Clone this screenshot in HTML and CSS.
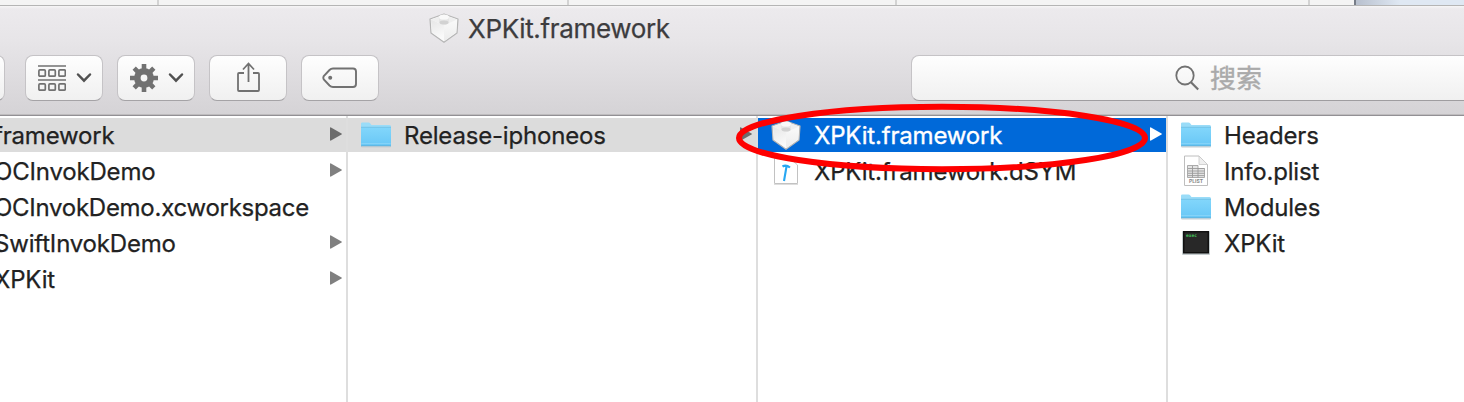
FILE: index.html
```html
<!DOCTYPE html>
<html lang="zh">
<head>
<meta charset="utf-8">
<title>XPKit.framework</title>
<link rel="stylesheet" href="styles.css">
</head>
<body>
<svg width="0" height="0" class="defs">
  <defs>
    <linearGradient id="folderFill" x1="0" y1="0" x2="0" y2="1"><stop offset="0" stop-color="#82d6fb"/><stop offset="1" stop-color="#68c7f6"/></linearGradient>
    <linearGradient id="brickLeft" x1="0" y1="0" x2="0.3" y2="1"><stop offset="0" stop-color="#e6e6e6"/><stop offset="1" stop-color="#fafafa"/></linearGradient>
    <linearGradient id="brickRight" x1="0" y1="0" x2="0" y2="1"><stop offset="0" stop-color="#fafafa"/><stop offset="1" stop-color="#ececec"/></linearGradient>
    <symbol id="folder" viewBox="0 0 32 28">
      <path d="M1 25V2.800Q1 1.500 2.300 1.500H8.500Q9.600 1.500 10.300 2.400L11.500 4H29.500Q31 4 31 5.500V25Z" fill="#9adcf8"/>
      <path d="M1 6.500H31V24Q31 25 30 25H2Q1 25 1 24Z" fill="url(#folderFill)"/>
      <path d="M1 6.300H31" stroke="#69bce3" stroke-width=".8"/>
      <path d="M1.300 22.500H30.700" stroke="#8ad5f8" stroke-width=".8"/>
      <path d="M1 25H31" stroke="#5aa9d1" stroke-width="1"/>
      <path d="M1.500 26H30.500" stroke="#c8cdd0" stroke-width="1"/>
    </symbol>
    <symbol id="brick" viewBox="0 0 30 30">
      <path d="M1 6L15 1L29 6L28 20L15 29.300L2 20Z" fill="#f8f8f8" stroke="#b5b5b5" stroke-width="1.200" stroke-linejoin="round"/>
      <path d="M2 6.500L15 12.500V28L3 19.500Z" fill="url(#brickLeft)"/>
      <path d="M28 6.500L15 12.500V28L27 19.500Z" fill="url(#brickRight)"/>
      <path d="M2 6.500L15 2L28 6.500L15 12.500Z" fill="#efefef"/>
      <path d="M10 4V9Q15 12.500 20 9V4Z" fill="#e6e6e6"/>
      <ellipse cx="15" cy="9.500" rx="4.500" ry="2" fill="#d2d2d2"/>
      <ellipse cx="15" cy="4" rx="5" ry="2.600" fill="#f9f9f9"/>
    </symbol>
    <symbol id="arrow" viewBox="0 0 12 14"><path d="M0 1Q0 0 1 .5L11.500 6.400Q12.300 7 11.500 7.600L1 13.500Q0 14 0 13Z" fill="currentColor"/></symbol>
    <symbol id="chevron" viewBox="0 0 16 12"><path d="M2 2.500L8 8.700L14 2.500" fill="none" stroke="#515151" stroke-width="2.500" stroke-linecap="round"/></symbol>
  </defs>
</svg>
<div class="screen">
  <div class="behind"><i class="b1"></i><i class="b2"></i><i class="b3"></i><i class="b4"></i><i class="b5"></i></div>
  <header class="chrome">
    <div class="title"><svg class="title-icon"><use href="#brick"/></svg><span class="title-text">XPKit.framework</span></div>
    <div class="toolbar">
      <div class="button clipped"></div>
      <div class="button">
        <svg width="28" height="28" viewBox="0 0 28 28" fill="none" stroke="#717171" stroke-width="1.700"><path d="M0 2H28M0 16H28"/><rect x=".9" y="5.900" width="6.400" height="6.300" rx="1"/><rect x="10.900" y="5.900" width="6.400" height="6.300" rx="1"/><rect x="20.900" y="5.900" width="6.400" height="6.300" rx="1"/><rect x=".9" y="19.900" width="6.400" height="6.300" rx="1"/><rect x="10.900" y="19.900" width="6.400" height="6.300" rx="1"/><rect x="20.900" y="19.900" width="6.400" height="6.300" rx="1"/></svg>
        <svg class="chev"><use href="#chevron"/></svg>
      </div>
      <div class="button">
        <svg width="28" height="28" viewBox="-14 -14 28 28"><g fill="none" stroke="#717171"><circle r="6.700" stroke-width="6.600"/><path d="M0 -14V-8M0 14V8M-14 0H-8M14 0H8" stroke-width="4.600"/><path d="M-9.800 -9.800L-6 -6M9.800 9.800L6 6M-9.800 9.800L-6 6M9.800 -9.800L6 -6" stroke-width="4.600"/></g></svg>
        <svg class="chev"><use href="#chevron"/></svg>
      </div>
      <div class="button center">
        <svg width="24" height="32" viewBox="0 0 24 32" fill="none" stroke="#717171" stroke-width="1.800"><path d="M8 12H3Q2 12 2 13V29Q2 30 3 30H22Q23 30 23 29V13Q23 12 22 12H17M12.500 21V2.500M7 8.500L12.500 2.500L18 8.500"/></svg>
      </div>
      <div class="button center">
        <svg class="tag" width="36" height="22" viewBox="0 0 36 22"><path d="M11 1.500H31Q34 1.500 34 4.500V17Q34 20 31 20H11Q9 20 7.500 18.500L1.800 12.500Q.8 10.800 1.800 9L7.500 3Q9 1.500 11 1.500Z" fill="none" stroke="#717171" stroke-width="1.900"/><circle cx="8.200" cy="10.800" r="2" fill="#717171"/></svg>
      </div>
      <div class="search">
        <svg width="24" height="26" viewBox="0 0 24 26" fill="none" stroke="#717171" stroke-width="1.800"><ellipse cx="10" cy="10.500" rx="8.700" ry="9"/><path d="M16 17.200L23.200 24.500" stroke-width="2.200"/></svg>
        <span class="search-text">搜索</span>
      </div>
    </div>
  </header>
  <main class="columns">
    <section class="column first">
      <div class="row active"><span class="name">framework</span><svg class="arrow"><use href="#arrow"/></svg></div>
      <div class="row"><span class="name">OCInvokDemo</span><svg class="arrow"><use href="#arrow"/></svg></div>
      <div class="row"><span class="name tight">OCInvokDemo.xcworkspace</span></div>
      <div class="row"><span class="name">SwiftInvokDemo</span><svg class="arrow"><use href="#arrow"/></svg></div>
      <div class="row"><span class="name">XPKit</span><svg class="arrow"><use href="#arrow"/></svg></div>
    </section>
    <section class="column">
      <div class="row active"><svg class="icon"><use href="#folder"/></svg><span class="name">Release-iphoneos</span><svg class="arrow"><use href="#arrow"/></svg></div>
    </section>
    <section class="column">
      <div class="row selected"><svg class="icon brick"><use href="#brick"/></svg><span class="name">XPKit.framework</span><svg class="arrow"><use href="#arrow"/></svg></div>
      <div class="row"><svg class="icon dsym" viewBox="0 0 32 30"><path d="M4.500 1H19L27.500 9V27.500H4.500Z" fill="#fff" stroke="#c2c2c2"/><path d="M4 28.500H28" stroke="#ddd"/><path d="M12.500 10.500Q16 8.200 20 11.500M16.500 10.500L14 25" fill="none" stroke="#27a7f2" stroke-width="2.100"/></svg><span class="name">XPKit.framework.dSYM</span></div>
    </section>
    <section class="column last">
      <div class="row"><svg class="icon"><use href="#folder"/></svg><span class="name">Headers</span></div>
      <div class="row"><svg class="icon plist" viewBox="0 0 32 32"><path d="M4.500 1H19L27.500 9.500V30.500H4.500Z" fill="#fff" stroke="#bebebe"/><path d="M19 1V9.500H27.500Z" fill="#efefef" stroke="#c8c8c8" stroke-width=".8"/><path d="M7.500 10.500H18V13.500H24.500V22.500H7.500Z" fill="#e4e4e4" stroke="#999" stroke-width=".8"/><path d="M8 13.500H24.500M8 16H24.500M8 18.300H24.500M8 20.600H24.500M12.500 11V22.500M18 13V22.500" stroke="#9a9a9a" stroke-width=".9"/><text x="16" y="28.300" text-anchor="middle" class="plist-text">PLIST</text></svg><span class="name">Info.plist</span></div>
      <div class="row"><svg class="icon"><use href="#folder"/></svg><span class="name">Modules</span></div>
      <div class="row"><svg class="icon exec" viewBox="0 0 32 28"><rect x="2" y="2" width="28" height="24" rx="1" fill="#c4ccce"/><rect x="3" y="2" width="26" height="22.500" fill="#111"/><rect x="4.500" y="3.500" width="23" height="19.500" fill="#282828"/><text x="6" y="8.200" class="exec-text">exec</text></svg><span class="name">XPKit</span></div>
    </section>
  </main>
  <svg class="annotation" width="416" height="72" viewBox="0 0 416 72"><ellipse cx="208" cy="36" rx="203" ry="31.200" fill="none" stroke="#fe0000" stroke-width="6"/></svg>
</div>
</body>
</html>
```

FILE: styles.css
```css
* { box-sizing: border-box; }
body { margin: 0; overflow: hidden; background: #fff; font-family: Inter, "Noto Sans CJK SC", sans-serif; }
.defs { position: absolute; }
svg { flex: none; display: block; }
.screen { position: relative; width: 1464px; height: 402px; overflow: hidden; display: flex; flex-direction: column; }
.behind { display: flex; height: 5px; background: #f4f4f4; }
.behind i { border-right: 2px solid #d3d3d3; }
.b1 { width: 159px; }
.b2 { width: 410px; }
.b3 { width: 328px; }
.b4 { width: 413px; }
.behind .b5 { flex: 1; border: 0; background: linear-gradient(90deg, #f4f4f4 44px, #777d88 44px, #777d88 46px, #b8c0ce 46px, #dfe8f3 90px); }
.chrome { height: 111px; border-top: 1px solid #b5b5b5; border-bottom: 1px solid #929094; background: linear-gradient(#f6f5f6 0, #eceaed 3px, #e7e5e8 35px, #d5d3d6 108px); box-shadow: inset 0 -1px #bebcbe; }
.title { height: 49px; padding-left: 429px; display: flex; align-items: flex-start; }
.title-icon { width: 30px; height: 30px; margin-top: 7px; }
.title-text { font-size: 26px; line-height: 34px; color: #3d3c3e; margin: 6px 0 0 9px; white-space: nowrap; letter-spacing: -.34px; -webkit-text-stroke: .25px #3d3c3e; }
.toolbar { display: flex; gap: 14px; height: 46px; }
.button { flex: none; width: 78px; height: 46px; border: 1px solid #c5c3c6; border-bottom-color: #a5a3a6; border-radius: 8px; background: linear-gradient(#fefefe, #f0f0f0); display: flex; align-items: center; padding-left: 12px; }
.button.clipped { width: 25px; margin-left: -20px; margin-right: 6px; }
.button.center { padding: 0; justify-content: center; }
.button.center svg { margin-top: -3px; }
.button.center .tag { margin: 0 0 0 -1px; }
.chev { width: 16px; height: 12px; margin-left: 10px; }
.search { width: 600px; flex: none; height: 46px; margin-left: 518px; border: 1px solid #c5c3c6; border-bottom-color: #9f9da0; border-radius: 8px; background: linear-gradient(#fefefe, #f0f0f0); display: flex; align-items: center; padding-left: 263px; }
.search-text { font-family: "Noto Sans CJK SC", sans-serif; font-size: 26px; line-height: 40px; color: #aaa; margin: -2px 0 0 11px; white-space: nowrap; -webkit-text-stroke: .4px #aaa; }
.columns { flex: 1; display: flex; }
.column { width: 410px; border-right: 2px solid #dedede; padding-top: 2px; display: flex; flex-direction: column; gap: 2px; }
.first { width: 348px; }
.last { width: 296px; border: 0; }
.row { display: flex; align-items: center; height: 34px; padding: 0 4px 0 12px; color: #808080; }
.first .row { padding-left: 0; }
.row.active { background: #dcdcdc; color: #6c6c6c; }
.row.selected { background: #0069d9; color: #fff; }
.name { font-size: 24px; line-height: 34px; color: #222; white-space: nowrap; margin: 2px 0 0 12px; letter-spacing: -.18px; -webkit-text-stroke: .25px currentColor; }
.name.tight { letter-spacing: -.27px; }
.first .name { margin-left: -6px; }
.selected .name { color: #fff; -webkit-text-stroke: .35px #fff; }
.icon { width: 32px; height: 28px; }
.icon.brick { width: 30px; height: 30px; margin: -2px 1px; }
.icon.dsym { height: 30px; }
.icon.plist { height: 32px; }
.arrow { width: 12px; height: 14px; margin: -2px 0 0 auto; }
.plist-text { font: bold 5px Inter, sans-serif; fill: #888; }
.exec-text { font: bold 4.500px "DejaVu Sans Mono", monospace; fill: #43c45a; }
.annotation { position: absolute; left: 734px; top: 102px; }
```
